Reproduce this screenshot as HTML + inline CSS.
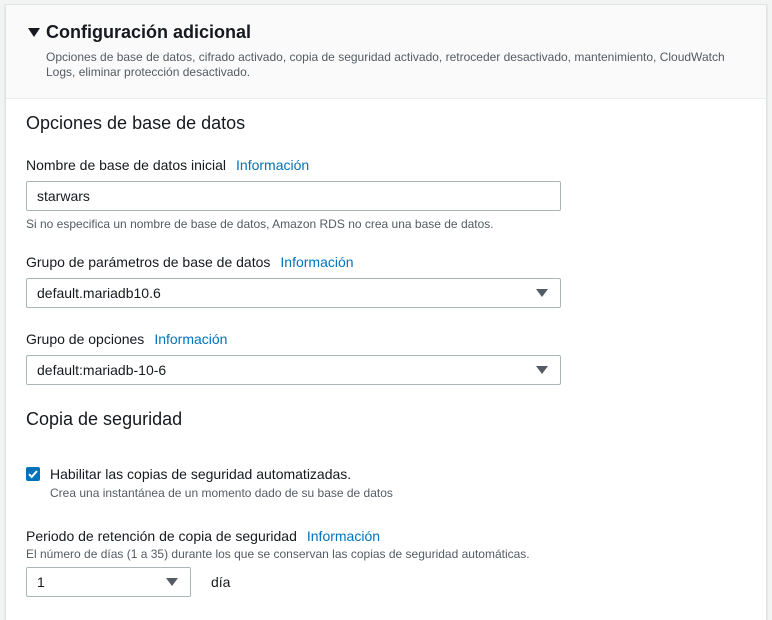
<!DOCTYPE html>
<html><head><meta charset="utf-8"><style>
*{margin:0;padding:0;box-sizing:border-box}
html,body{width:772px;height:620px;overflow:hidden}
body{background:#f2f3f3;font-family:"Liberation Sans",sans-serif;color:#16191f;position:relative}
.c{position:absolute;left:5px;top:4px;width:762px;height:630px;background:#fff;border:1px solid #dfe1e3;box-shadow:0 1px 1px rgba(0,28,36,.2)}
.hd{position:absolute;left:0;top:0;width:760px;height:94px;background:#fafafa;border-bottom:1px solid #eaeded}
.a{position:absolute;white-space:nowrap}
.t{font-size:18px;font-weight:bold}
.s{font-size:12px;color:#545b64;line-height:15px}
.h2{font-size:18px}
.l{font-size:14px}
.l span{color:#0073bb;margin-left:10px}
.in{position:absolute;border:1px solid #aab7b8;border-radius:2px;height:30px;font-size:14px;padding:6px 10px}
.ar{position:absolute;right:12px;top:10px;width:0;height:0;border-left:6px solid transparent;border-right:6px solid transparent;border-top:8px solid #545b64}
</style></head><body>
<div class="c">
<div class="hd"></div>
</div>
<div class="a" style="left:28px;top:28px;width:0;height:0;border-left:6px solid transparent;border-right:6px solid transparent;border-top:9px solid #16191f"></div>
<div class="a t" style="left:46px;top:22px">Configuración adicional</div>
<div class="a s" style="left:46px;top:50px;white-space:normal;width:690px">Opciones de base de datos, cifrado activado, copia de seguridad activado, retroceder desactivado, mantenimiento, CloudWatch Logs, eliminar protección desactivado.</div>
<div class="a h2" style="left:26px;top:113px">Opciones de base de datos</div>
<div class="a l" style="left:26px;top:157px">Nombre de base de datos inicial<span>Información</span></div>
<div class="in" style="left:26px;top:181px;width:535px">starwars</div>
<div class="a s" style="left:26px;top:217px">Si no especifica un nombre de base de datos, Amazon RDS no crea una base de datos.</div>
<div class="a l" style="left:26px;top:254px">Grupo de parámetros de base de datos<span>Información</span></div>
<div class="in" style="left:26px;top:278px;width:535px">default.mariadb10.6<div class="ar"></div></div>
<div class="a l" style="left:26px;top:331px">Grupo de opciones<span>Información</span></div>
<div class="in" style="left:26px;top:355px;width:535px">default:mariadb-10-6<div class="ar"></div></div>
<div class="a h2" style="left:26px;top:409px">Copia de seguridad</div>
<div class="a" style="left:26px;top:467px;width:14px;height:14px;background:#0073bb;border-radius:2px"><svg width="14" height="14" viewBox="0 0 14 14"><path d="M3 7.2l2.7 2.7L11 4" stroke="#fff" stroke-width="2" fill="none"/></svg></div>
<div class="a l" style="left:50px;top:466px">Habilitar las copias de seguridad automatizadas.</div>
<div class="a s" style="left:50px;top:486px">Crea una instantánea de un momento dado de su base de datos</div>
<div class="a l" style="left:26px;top:528px">Periodo de retención de copia de seguridad<span>Información</span></div>
<div class="a s" style="left:26px;top:547px">El número de días (1 a 35) durante los que se conservan las copias de seguridad automáticas.</div>
<div class="in" style="left:26px;top:567px;width:165px">1<div class="ar"></div></div>
<div class="a l" style="left:211px;top:574px">día</div>
</body></html>
